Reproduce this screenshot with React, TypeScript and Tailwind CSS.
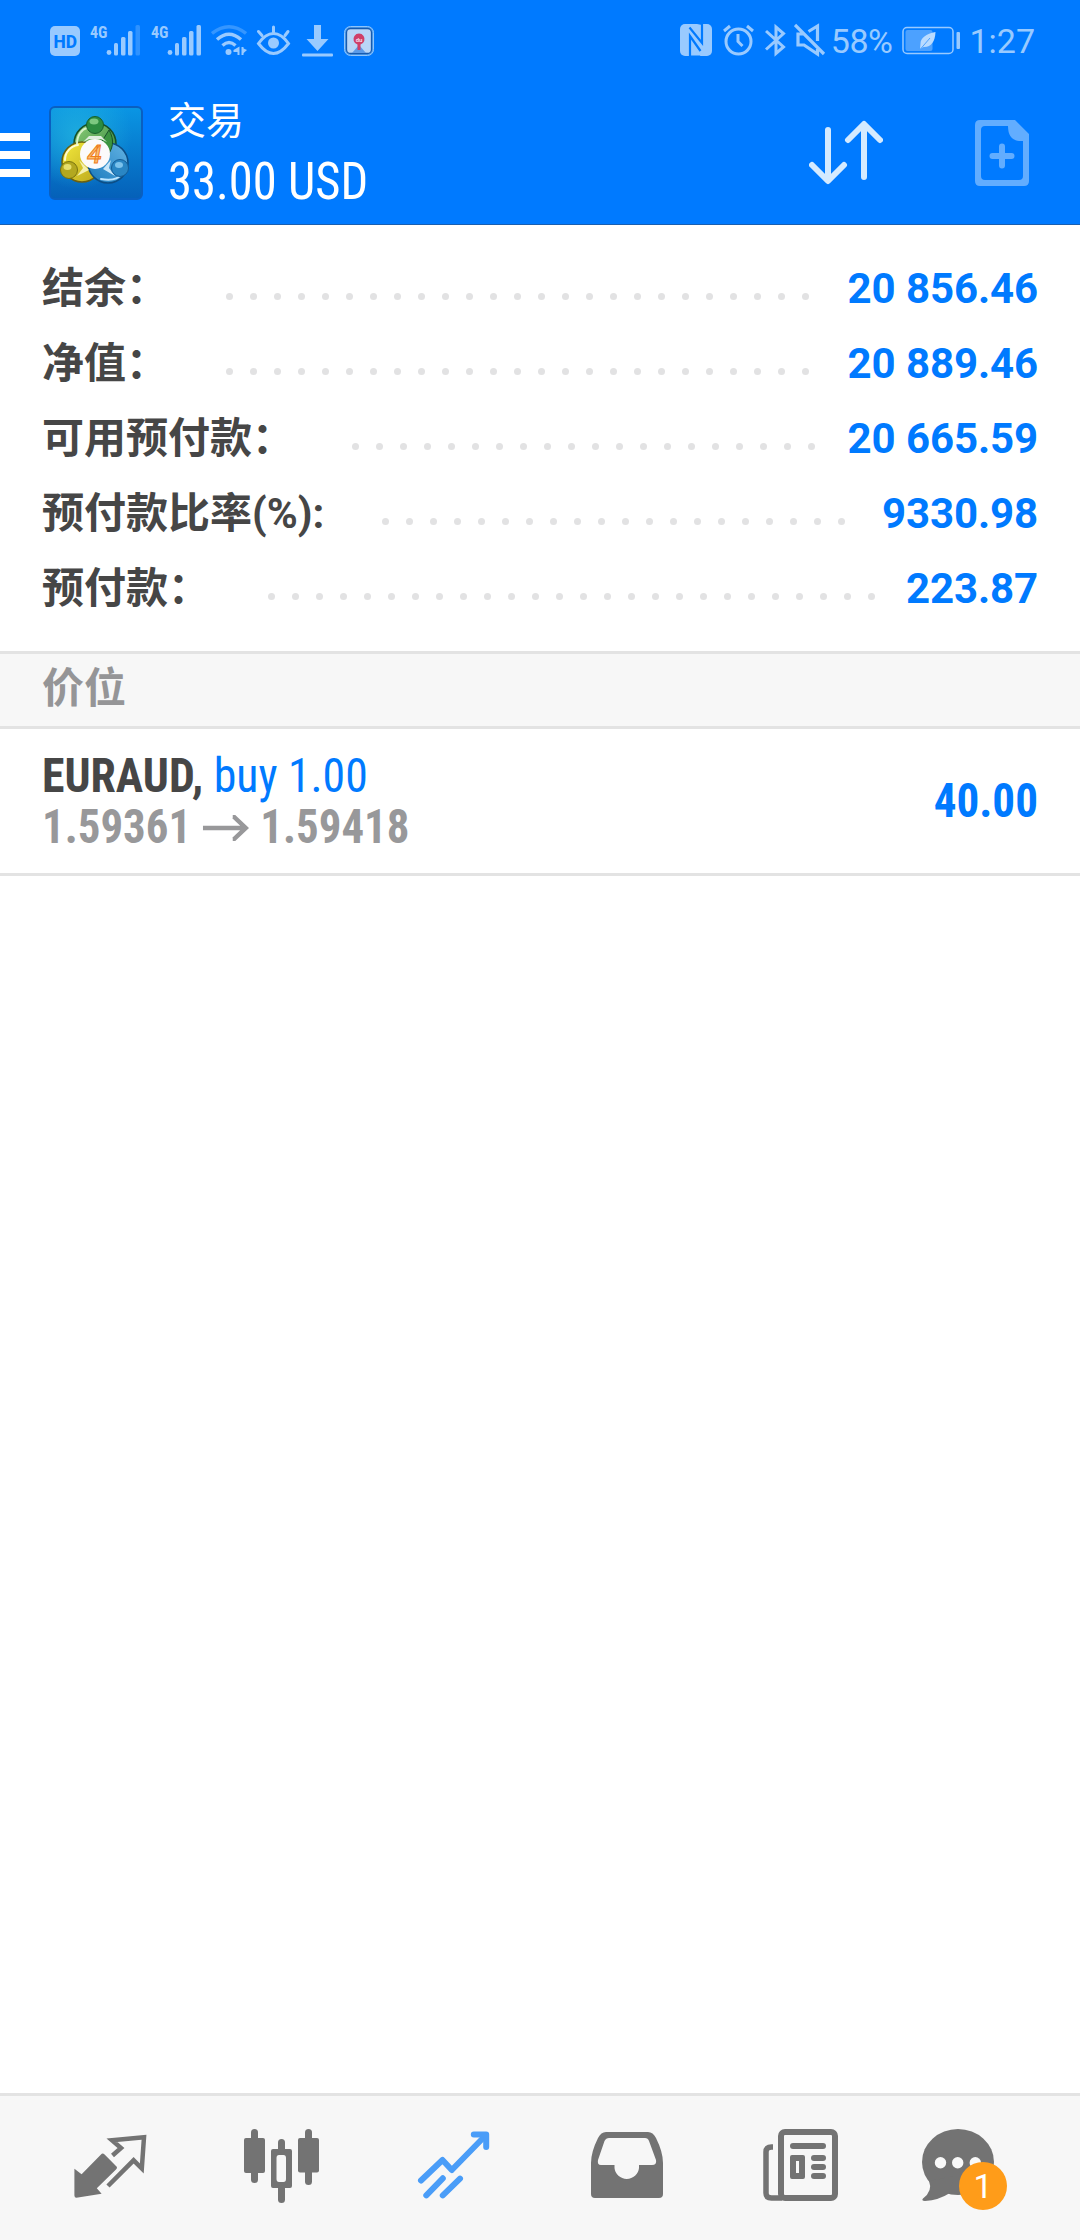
import React from 'react';

const summary = [
  { label: '结余：', value: '20 856.46', dots: 25 },
  { label: '净值：', value: '20 889.46', dots: 25 },
  { label: '可用预付款：', value: '20 665.59', dots: 20 },
  { label: '预付款比率(%):', value: '9330.98', dots: 20 },
  { label: '预付款：', value: '223.87', dots: 26 },
];

const Signal = ({ weak = false }) => (
  <svg width="52" height="38" viewBox="0 0 52 38" fill="#99caff">
    <text x="0" y="15.5" fontSize="17" fontWeight="700" fontFamily="Roboto Condensed" textLength="17.5" lengthAdjust="spacingAndGlyphs">4G</text>
    <circle cx="19" cy="30.5" r="2.4" />
    <rect x="24" y="21" width="4" height="12.5" rx="1.5" />
    <rect x="31" y="15" width="4.5" height="18.5" rx="1.5" />
    <rect x="38" y="9" width="4.5" height="24.5" rx="1.5" />
    <rect x="45.5" y="3" width="4.5" height="30.5" rx="1.5" opacity={weak ? 0.3 : 1} />
  </svg>
);

const StatusBar = () => (
  <div className="flex h-[82px] items-start pt-[22px] pl-[50px] pr-[45px] font-['Roboto'] text-[#99caff]">
    <svg width="30" height="38" viewBox="0 0 30 38">
      <rect y="4" width="30" height="30" rx="5" fill="#99caff" />
      <text x="3.5" y="25.5" fontSize="18" fontWeight="800" fontFamily="Roboto" fill="#007aff" textLength="23.5" lengthAdjust="spacingAndGlyphs">HD</text>
    </svg>
    <div className="ml-[10px] flex gap-[9px]">
      <Signal weak />
      <Signal />
    </div>
    {/* wifi */}
    <svg className="ml-[8px]" width="36" height="38" viewBox="0 0 36 38" fill="none" stroke="#99caff" strokeWidth="3.4">
      <path d="M1 11.5Q18-2 35 11.5" opacity=".35" />
      <path d="M6 17.5Q18 7 30 17.5" />
      <path d="M11.5 23.5Q18 17.5 24.5 23.5" />
      <circle cx="17.5" cy="30" r="3" fill="#99caff" stroke="none" />
      <path d="M28.5 24.5V33H26.5V30H22.5V28ZM31.5 26l4.5 2-4.5 4Z" fill="#99caff" stroke="none" />
      <path d="M31.5 25v8" strokeWidth="2" />
    </svg>
    {/* eye comfort */}
    <svg className="ml-[9px]" width="35" height="38" viewBox="0 0 35 38" fill="none" stroke="#99caff" strokeWidth="3" strokeLinecap="round">
      <path d="M2.5 21.5Q9.5 11.5 17.5 11.5T32.5 21.5Q25 31.5 17.5 31.5T2.5 21.5Z" />
      <circle cx="17.5" cy="21" r="5.5" fill="#99caff" stroke="none" />
      <path d="M17.5 5v5M2.5 9.5l3.5 4M32 9.5l-3 4" />
    </svg>
    {/* download */}
    <svg className="ml-[10px]" width="33" height="38" viewBox="0 0 33 38" fill="#99caff">
      <path d="M13 3h7v14h7.5L16.5 29 5.5 17H13Z" />
      <rect x="1" y="31.5" width="31" height="3" rx="1" />
    </svg>
    {/* map app */}
    <svg className="ml-[10px]" width="30" height="38" viewBox="0 0 30 38">
      <rect x=".5" y="4.5" width="29" height="29" rx="6" fill="#4f9fee" stroke="#8fc4fb" />
      <rect x="2.5" y="6.5" width="25" height="25" rx="4" fill="#b9d6f7" stroke="#175bb0" strokeWidth="1.3" />
      <path d="M8 31l7-8 7 8Z" fill="#5b9be8" />
      <path d="M13.5 28V22.500a5.600 5.600 0 1 1 3 0V28Z" fill="#cf3f68" />
      <text x="15" y="19.5" fontSize="6" fontWeight="700" fontFamily="Roboto" textAnchor="middle" fill="#f3d9e8">du</text>
    </svg>

    <div className="ml-auto flex items-start">
      {/* nfc */}
      <svg width="32" height="38" viewBox="0 0 32 38">
        <rect y="2" width="32" height="32" rx="5" fill="#99caff" />
        <path d="M10 35V14L20.5 29M22 1V21L9.5 5.5" stroke="#007aff" strokeWidth="2.2" fill="none" />
        <path d="M10 33.5h10.5l-2 1.5H9ZM12 1h10v2Z" fill="#007aff" />
      </svg>
      {/* alarm */}
      <svg className="ml-[11px]" width="31" height="38" viewBox="0 0 31 38" fill="none" stroke="#99caff" strokeWidth="3">
        <circle cx="15.5" cy="19.5" r="12.5" />
        <path d="M15 12v7.5l4.5 4.5M1 9l6-5M30 9l-6-5" />
      </svg>
      {/* bluetooth */}
      <svg className="ml-[11px]" width="21" height="38" viewBox="0 0 21 38" fill="none" stroke="#99caff" strokeWidth="3">
        <path d="M1 9l17.5 16-7.5 6.5V5l7.5 6.5L1 27.5" />
      </svg>
      {/* muted */}
      <svg className="ml-[8px]" width="32" height="38" viewBox="0 0 32 38" fill="none" stroke="#99caff" strokeWidth="3.2">
        <path d="M1 3l29 29M14.5 9.5L23.5 4v15M9.5 12H4v11h6l13.5 9V27" />
      </svg>
      <span className="ml-[5px] text-[34px] leading-[38px] tracking-[-0.5px]">58%</span>
      {/* battery */}
      <svg className="ml-[10px]" width="59" height="38" viewBox="0 0 59 38">
        <rect x="1" y="5.5" width="50" height="26" rx="4" fill="none" stroke="#99caff" strokeWidth="1.5" />
        <rect x="3.5" y="8" width="27" height="21" rx="2" fill="#4ca1ff" />
        <rect x="54.5" y="10" width="3.5" height="17" rx="1" fill="#99caff" />
        <path d="M33.5 10C24 12 18.5 16 18.5 21.5L18 27l3.5-2C29 25.5 33 20 33.5 10Z" fill="#b9dbff" />
        <path d="M18.5 27L28 16" stroke="#4ca1ff" strokeWidth="1" />
      </svg>
      <span className="ml-[8px] text-[34px] leading-[38px]">1:27</span>
    </div>
  </div>
);

const Logo = () => (
  <svg className="ml-[19px] shrink-0" width="94" height="94" viewBox="0 0 94 94">
    <defs>
      <linearGradient id="bg" x1="0" y1="0" x2="0" y2="1">
        <stop offset="0" stopColor="#0a96e4" />
        <stop offset="1" stopColor="#0560b8" />
      </linearGradient>
      <radialGradient id="sky" cx=".3" cy=".3" r=".6">
        <stop offset="0" stopColor="#22b4e0" stopOpacity=".8" />
        <stop offset="1" stopColor="#22b4e0" stopOpacity="0" />
      </radialGradient>
      <linearGradient id="green" x1="0" y1="0" x2="1" y2="1">
        <stop offset="0" stopColor="#8fce7a" />
        <stop offset="1" stopColor="#2c8436" />
      </linearGradient>
      <linearGradient id="yellow" x1="0" y1="0" x2="1" y2="1">
        <stop offset="0" stopColor="#f4ea3c" />
        <stop offset="1" stopColor="#b9a51c" />
      </linearGradient>
      <linearGradient id="blue" x1="1" y1="0" x2="0" y2="1">
        <stop offset="0" stopColor="#64b4e4" />
        <stop offset="1" stopColor="#1878bc" />
      </linearGradient>
    </defs>
    <rect x="1" y="1" width="92" height="92" rx="5" fill="url(#bg)" stroke="#0a5fc0" strokeWidth="2" />
    <rect x="2" y="2" width="90" height="90" rx="4" fill="url(#sky)" />
    <circle cx="46" cy="38" r="21" fill="url(#green)" stroke="#17502a" strokeWidth="1.5" />
    <circle cx="33" cy="56" r="20" fill="url(#yellow)" stroke="#6b6010" strokeWidth="1.5" />
    <circle cx="59" cy="57" r="20" fill="url(#blue)" stroke="#0c4e86" strokeWidth="1.5" />
    <path d="M60 24C66 34 64 44 57 51L50 40Z" fill="#3c9440" stroke="#17502a" />
    <g fill="none" strokeLinecap="round" strokeWidth="2">
      <path d="M28 38C28 29 33 23 38 22" stroke="#d8f2c8" />
      <path d="M16 54C16 46 22 40 29 39" stroke="#fffbd0" />
      <path d="M52 73C62 75 69 73 73 68" stroke="#bfe6ff" />
    </g>
    <path d="M34 36l6-6h12l6 6-6-3H40Z" fill="#dfeedd" />
    <path d="M30 54l4 8-6 8 12-6Z" fill="#f4f0b0" />
    <path d="M62 54l-2 8 6 8-12-7Z" fill="#c8e6f8" />
    <circle cx="46" cy="19" r="8.5" fill="#2c8c40" stroke="#17602a" />
    <ellipse cx="45" cy="15.5" rx="4.5" ry="3" fill="#7cc880" />
    <circle cx="20" cy="64" r="8.5" fill="#b3a820" stroke="#7a7410" />
    <ellipse cx="18.5" cy="61" rx="4" ry="3" fill="#e6df6c" />
    <circle cx="71" cy="62" r="8.5" fill="#2a86c4" stroke="#145c96" />
    <ellipse cx="70" cy="59" rx="4" ry="3" fill="#7cc2ec" />
    <circle cx="46" cy="48" r="15" fill="#fbfafa" />
    <text x="45.5" y="57" fontSize="26" fontStyle="italic" fontWeight="500" fontFamily="Roboto" textAnchor="middle" fill="#fbc070" stroke="#ee7d1c" strokeWidth="1">4</text>
  </svg>
);

const AppBar = () => (
  <div className="flex h-[142px] items-center">
    <div className="mt-[4px] flex w-[30px] flex-col gap-[10px]">
      <div className="h-[8px] bg-white"></div>
      <div className="h-[8px] bg-white"></div>
      <div className="h-[8px] bg-white"></div>
    </div>
    <Logo />
    <div className="-mt-[3px] ml-[25px] flex-1 text-white">
      <div className="text-[38px] leading-[60px] font-['Roboto','Noto_Sans_CJK_SC',sans-serif]">交易</div>
      <div className="w-fit origin-left scale-x-[0.935] text-[52px] leading-[62px] font-[440] font-['Roboto_Condensed']">33.00 USD</div>
    </div>
    <svg className="mr-[92px]" width="74" height="66" viewBox="0 0 74 66" fill="none" stroke="#d4eaff" strokeWidth="6" strokeLinecap="round" strokeLinejoin="round">
      <path d="M19 10v50M3 45l16 16 16-16M55 57V5M39 20L55 4l16 16" />
    </svg>
    <svg className="mr-[51px]" width="54" height="66" viewBox="0 0 54 66" fill="#62adff">
      <path fillRule="evenodd" d="M5 0H40L54 14V61Q54 66 49 66H5Q0 66 0 61V5Q0 0 5 0ZM10 6Q6 6 6 10V56Q6 60 10 60H44Q48 60 48 56V21H44Q33 20 33 6Z" />
      <path d="M27 26.5v19M17.5 36h19" stroke="#62adff" strokeWidth="6" strokeLinecap="round" />
    </svg>
  </div>
);

const SummaryRow = ({ label, value, dots }) => (
  <div className="flex h-[75px] items-center text-[42px] font-bold">
    <span className="mt-[2px] whitespace-nowrap text-[#464646] font-['Roboto','Noto_Sans_CJK_SC',sans-serif]">{label}</span>
    <div className="mt-[17px] ml-[58px] flex gap-[17px]">
      {Array.from({ length: dots }, (_, i) => (
        <div key={i} className="size-[7px] rounded-full bg-[#e2e2e3]"></div>
      ))}
    </div>
    <span className="mt-[2px] ml-auto whitespace-nowrap tracking-[-0.1px] text-[#007aff] font-['Roboto']">{value}</span>
  </div>
);

const TabBar = () => (
  <div className="flex h-[147px] items-start gap-[73px] border-t-[3px] border-[#e3e3e3] bg-[#f7f7f7] pt-[20px] pl-[60px]">
    {/* quotes */}
    <svg width="100" height="100" viewBox="0 0 100 100">
      <path d="M14.4 52.7L21.6 58.3 41 38.5Q42.6 36.5 44.6 38.5L56 50Q58 51.5 56 53.5L36.8 72.3 41.6 77.7 16.4 81.7Q14.4 81.7 14.4 79.5Z" fill="#737373" />
      <path d="M52.5 39.5L61 32 52 24.3 84 21.3 81.8 52.5 73.6 44.3 48 70" fill="none" stroke="#737373" strokeWidth="4.5" />
    </svg>
    {/* charts */}
    <svg width="100" height="100" viewBox="0 0 100 100" fill="#737373">
      <rect x="11" y="22" width="21" height="35" rx="2" />
      <rect x="18" y="13" width="7" height="54" rx="3.5" />
      <path fillRule="evenodd" d="M40 33H57Q59 33 59 35V70Q59 72 57 72H40Q38 72 38 70V35Q38 33 40 33ZM46 39Q43.5 39 43.5 42V63Q43.5 66 46 66H50.5Q53 66 53 63V42Q53 39 50.5 39Z" />
      <rect x="45" y="23" width="7" height="14" rx="3.5" />
      <rect x="45" y="69" width="7" height="18" rx="3.5" />
      <rect x="65" y="22" width="21" height="34.5" rx="2" />
      <rect x="72" y="13" width="7" height="56" rx="3.5" />
    </svg>
    {/* trade */}
    <svg width="100" height="100" viewBox="0 0 100 100" fill="none" stroke="#4a9df8" strokeWidth="6" strokeLinejoin="round" strokeLinecap="round">
      <path d="M15 64.5L36.5 44 45.8 54 79.5 19.5" />
      <path d="M67.8 18.5H80.2V31" />
      <path d="M20.3 79.3L36.8 62.3M36.8 79.3L54 62.7" />
    </svg>
    {/* history */}
    <svg width="100" height="100" viewBox="0 0 100 100" fill="#737373">
      <path fillRule="evenodd" d="M27 16H69Q74 16 77 22Q84 36 84 47V78Q84 82 80 82H16Q12 82 12 78V47Q12 36 19 22Q22 16 27 16ZM30 22Q27 22 25.5 25L19 44Q18 49 22 49H35.5V52A12.3 12 0 0 0 60 52V49H73Q78 49 77 44L70 25Q69 22 66 22Z" />
    </svg>
    {/* news */}
    <svg width="100" height="100" viewBox="0 0 100 100" fill="#737373">
      <rect x="29" y="16" width="54" height="66" rx="4" fill="none" stroke="#737373" strokeWidth="6" />
      <path d="M21 31H19.5Q14 31 14 36V77Q14 82 19.5 82H30" fill="none" stroke="#737373" strokeWidth="5.5" />
      <rect x="38" y="27" width="36" height="6" rx="3" />
      <path fillRule="evenodd" d="M40 39H51Q53 39 53 41V61Q53 63 51 63H40Q38 63 38 61V41Q38 39 40 39ZM44 45V57H47V45Z" />
      <rect x="59" y="39" width="15" height="6" rx="3" />
      <rect x="59" y="48" width="15" height="6" rx="3" />
      <rect x="59" y="57" width="15" height="6" rx="3" />
    </svg>
    {/* mailbox */}
    <div className="relative size-[100px]">
      <svg className="overflow-visible" width="100" height="100" viewBox="0 0 100 100">
        <ellipse cx="33" cy="46" rx="36" ry="33" fill="#737373" />
        <path d="M4 65Q8 75-2 82.5Q-4 84.5 0 85Q14 84 24 77.5L30 60Z" fill="#737373" />
        <circle cx="15.5" cy="46.7" r="5.7" fill="#f9f9f9" />
        <circle cx="32.7" cy="46.7" r="5.7" fill="#f9f9f9" />
        <circle cx="50.3" cy="46.7" r="5.7" fill="#f9f9f9" />
      </svg>
      <span className="absolute top-[46px] left-[34px] flex size-[48px] items-center justify-center rounded-full bg-[#ff9c19] text-[34px] leading-none text-white font-['Roboto']">1</span>
    </div>
  </div>
);

const App = () => {
  return (
    <div lang="zh-CN" className="flex h-[2240px] w-[1080px] flex-col overflow-hidden bg-white">
      <header className="h-[225px] border-b border-[#1a5fb0] bg-[#007aff]">
        <StatusBar />
        <AppBar />
      </header>

      <section className="px-[42px] pt-[25px] pb-[26px]">
        {summary.map((row) => (
          <SummaryRow key={row.label} {...row} />
        ))}
      </section>

      <div className="h-[78px] border-y-[3px] border-[#e3e3e3] bg-[#f7f7f7] pl-[42px] text-[42px] leading-[70px] font-bold text-[#959597] font-['Roboto','Noto_Sans_CJK_SC',sans-serif]">
        价位
      </div>

      <div className="flex h-[147px] items-center border-b-[3px] border-[#e3e3e3] px-[42px] text-[48px] font-['Roboto_Condensed']">
        <div className="flex-1">
          <div className="w-fit origin-left scale-x-[0.953] leading-[51px]">
            <span className="font-bold text-[#464646]">EURAUD,</span> <span className="font-[440] text-[#007aff]">buy 1.00</span>
          </div>
          <div className="flex w-fit origin-left scale-x-[0.935] items-center leading-[51px] font-bold text-[#98989a]">
            <span>1.59361</span>
            <svg className="mx-[12px] mt-[2px]" width="50" height="26" viewBox="0 0 50 26" fill="none" stroke="#98989a" strokeWidth="4.5">
              <path d="M0 13H46M32 1.5h1L46 13 33 24.5h-1" />
            </svg>
            <span>1.59418</span>
          </div>
        </div>
        <span className="origin-right scale-x-[0.94] font-bold text-[#007aff]">40.00</span>
      </div>

      <main className="flex-1"></main>

      <TabBar />
    </div>
  );
};

export default App;
